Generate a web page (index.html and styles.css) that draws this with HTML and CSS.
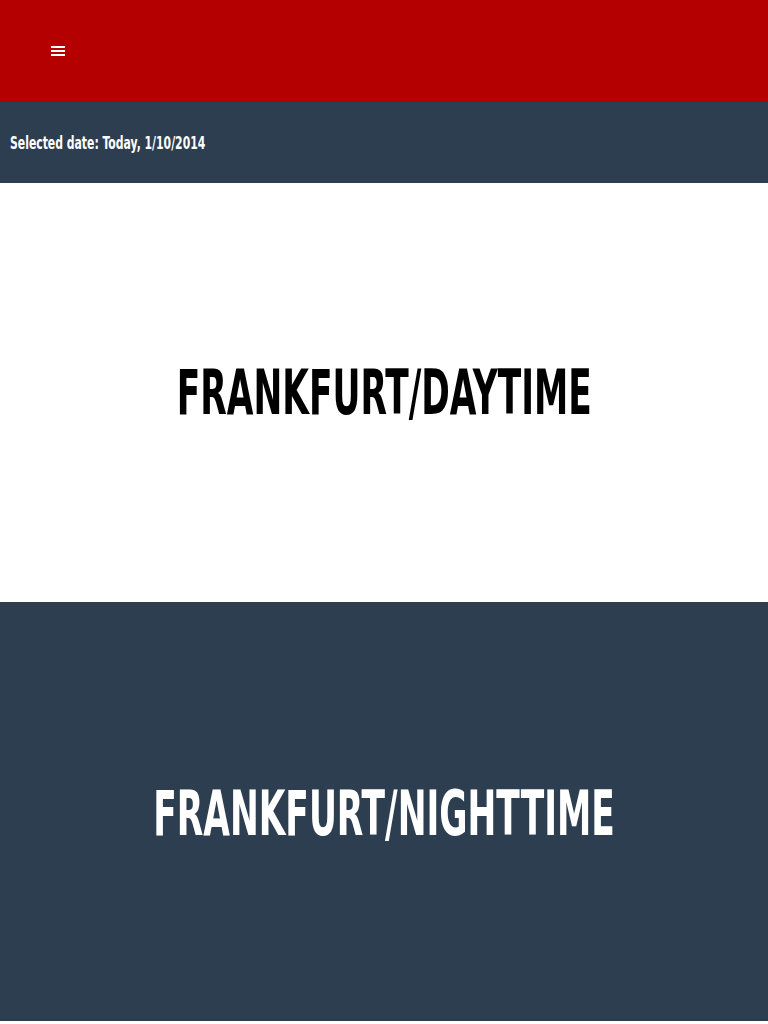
FILE: index.html
```html
<!DOCTYPE html>
<html>
<head>
<meta charset="utf-8">
<link rel="stylesheet" href="styles.css">
</head>
<body>
<header class="topbar">
  <button class="menu-btn" aria-label="Menu">
    <svg width="14" height="11" viewBox="0 0 14 11"><rect x="0" y="0" width="14" height="2" fill="#fff"/><rect x="0" y="4" width="14" height="2" fill="#fff"/><rect x="0" y="8" width="14" height="2" fill="#fff"/></svg>
  </button>
</header>
<div class="datebar"><span class="date-text">Selected date: Today, 1/10/2014</span></div>
<section class="panel panel-day"><h1 class="panel-title">FRANKFURT/DAYTIME</h1></section>
<section class="panel panel-night"><h1 class="panel-title">FRANKFURT/NIGHTTIME</h1></section>
</body>
</html>
```
FILE: styles.css
```css
html, body {
  margin: 0;
  padding: 0;
  background: #ffffff;
}
body {
  font-family: "DejaVu Sans Condensed", "Liberation Sans", sans-serif;
}
.topbar {
  height: 102px;
  background: #b40000;
  display: flex;
  align-items: center;
}
.menu-btn {
  margin-left: 51px;
  padding: 0;
  border: 0;
  background: transparent;
  display: flex;
  width: 14px;
  height: 11px;
}
.datebar {
  height: 81px;
  background: #2d3e50;
  color: #ffffff;
  display: flex;
  align-items: center;
  padding-left: 10px;
}
.date-text {
  display: inline-block;
  font-size: 18px;
  font-weight: bold;
  transform: scaleX(0.67);
  transform-origin: left center;
  white-space: nowrap;
}
.panel {
  height: 419px;
  display: flex;
  align-items: center;
  justify-content: center;
}
.panel-day {
  background: #ffffff;
  color: #000000;
}
.panel-night {
  background: #2d3e50;
  color: #ffffff;
  padding-top: 3px;
  box-sizing: border-box;
}
.panel-title {
  margin: 0;
  font-size: 62px;
  font-weight: bold;
  white-space: nowrap;
  transform: scaleX(0.617);
  transform-origin: center center;
}
```
